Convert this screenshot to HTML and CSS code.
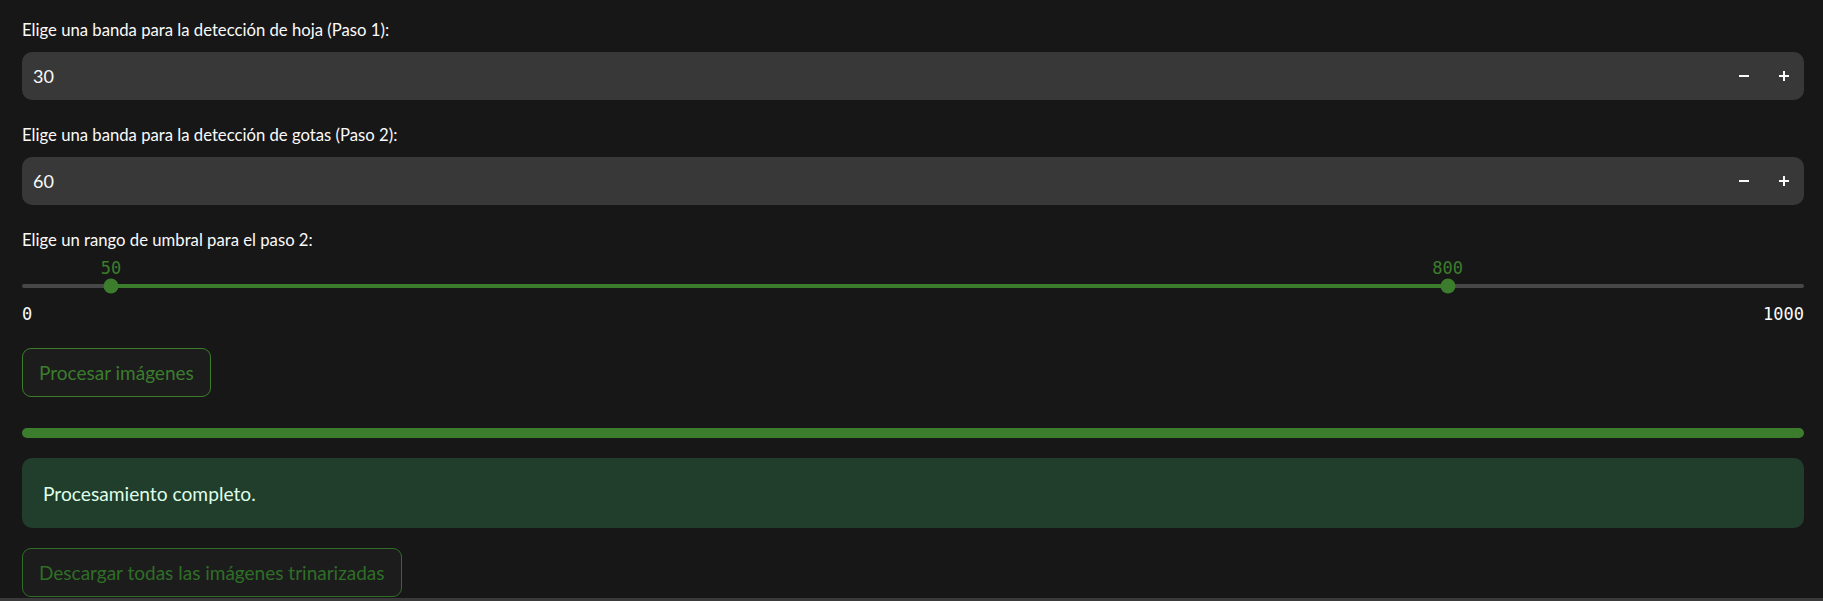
FILE: index.html
```html
<!DOCTYPE html>
<html lang="es">
<head>
<meta charset="utf-8">
<title>Procesamiento</title>
<link rel="stylesheet" href="styles.css">
</head>
<body>
<main class="page">
  <section class="field">
    <label class="label">Elige una banda para la detección de hoja (Paso 1):</label>
    <div class="number-input">
      <span class="value">30</span>
      <button class="step" aria-label="menos"><svg width="10" height="10" viewBox="0 0 10 10"><rect x="0" y="4" width="10" height="2" fill="#fafafa"/></svg></button>
      <button class="step" aria-label="más"><svg width="10" height="10" viewBox="0 0 10 10"><rect x="0" y="4" width="10" height="2" fill="#fafafa"/><rect x="4" y="0" width="2" height="10" fill="#fafafa"/></svg></button>
    </div>
  </section>

  <section class="field">
    <label class="label">Elige una banda para la detección de gotas (Paso 2):</label>
    <div class="number-input">
      <span class="value">60</span>
      <button class="step" aria-label="menos"><svg width="10" height="10" viewBox="0 0 10 10"><rect x="0" y="4" width="10" height="2" fill="#fafafa"/></svg></button>
      <button class="step" aria-label="más"><svg width="10" height="10" viewBox="0 0 10 10"><rect x="0" y="4" width="10" height="2" fill="#fafafa"/><rect x="4" y="0" width="2" height="10" fill="#fafafa"/></svg></button>
    </div>
  </section>

  <section class="field">
    <label class="label">Elige un rango de umbral para el paso 2:</label>
    <div class="slider">
      <div class="rail">
        <div class="fill" style="left:5%;width:75%"></div>
        <span class="thumb-label" style="left:5%">50</span>
        <span class="thumb" style="left:5%"></span>
        <span class="thumb-label" style="left:80%">800</span>
        <span class="thumb" style="left:80%"></span>
      </div>
      <div class="range">
        <span>0</span>
        <span>1000</span>
      </div>
    </div>
  </section>

  <button class="btn btn-process">Procesar imágenes</button>

  <div class="progress"></div>

  <div class="alert">Procesamiento completo.</div>

  <button class="btn btn-download">Descargar todas las imágenes trinarizadas</button>
</main>
<div class="bottom-bar"></div>
</body>
</html>
```
FILE: styles.css
```css
* { box-sizing: border-box; }
html, body { margin: 0; padding: 0; }
body {
  background: #171717;
  color: #fafafa;
  font-family: "Source Sans Pro", Lato, sans-serif;
  height: 601px;
  overflow: hidden;
  display: flex;
  flex-direction: column;
}
.page {
  padding: 18px 19px 0 22px;
  display: flex;
  flex-direction: column;
  align-items: flex-start;
  flex: 1;
}
.field { width: 100%; display: flex; flex-direction: column; margin-bottom: 23px; }
.label {
  font-size: 16.7px;
  line-height: 24px;
  margin-bottom: 10px;
}
.number-input {
  height: 48px;
  background: #383838;
  border-radius: 10px;
  display: flex;
  align-items: center;
  padding-left: 11px;
}
.value { flex: 1; font-size: 18px; }
.step {
  width: 40px;
  height: 48px;
  background: transparent;
  border: 0;
  padding: 0;
  display: flex;
  align-items: center;
  justify-content: center;
}
.rail {
  position: relative;
  height: 4px;
  margin-top: 22px;
  background: #474747;
  border-radius: 2px;
}
.fill {
  position: absolute;
  top: 0;
  height: 4px;
  background: #3b7d2d;
}
.thumb {
  position: absolute;
  top: 50%;
  width: 15px;
  height: 15px;
  border-radius: 50%;
  background: #3b7d2d;
  transform: translate(-50%, -50%);
}
.thumb-label {
  position: absolute;
  bottom: 10px;
  transform: translateX(-50%);
  font-family: "DejaVu Sans Mono", monospace;
  font-size: 17px;
  line-height: 20px;
  color: #3b7d2d;
}
.range {
  margin-top: 16px;
  display: flex;
  justify-content: space-between;
  font-family: "DejaVu Sans Mono", monospace;
  font-size: 17px;
  line-height: 20px;
}
.field:last-of-type { margin-bottom: 0; }
.btn {
  height: 49px;
  padding: 0 16px;
  background: #1c1c1c;
  border: 1px solid #3b7d2d;
  border-radius: 9px;
  font-family: "Source Sans Pro", Lato, sans-serif;
  font-size: 19px;
  color: #3b7d2d;
}
.btn-process { margin-top: 24px; }
.progress {
  width: 100%;
  height: 10px;
  margin-top: 31px;
  background: #3b7d2d;
  border-radius: 5px;
}
.alert {
  width: 100%;
  height: 70px;
  margin-top: 20px;
  background: #213d2b;
  border-radius: 10px;
  padding: 0 21px;
  display: flex;
  align-items: center;
  font-size: 19.2px;
  color: #dffde9;
}
.btn-download { margin-top: 20px; color: #2f6e27; border-color: #2f6e27; }
.bottom-bar { height: 3px; background: #3a3a3a; flex: none; }
```
